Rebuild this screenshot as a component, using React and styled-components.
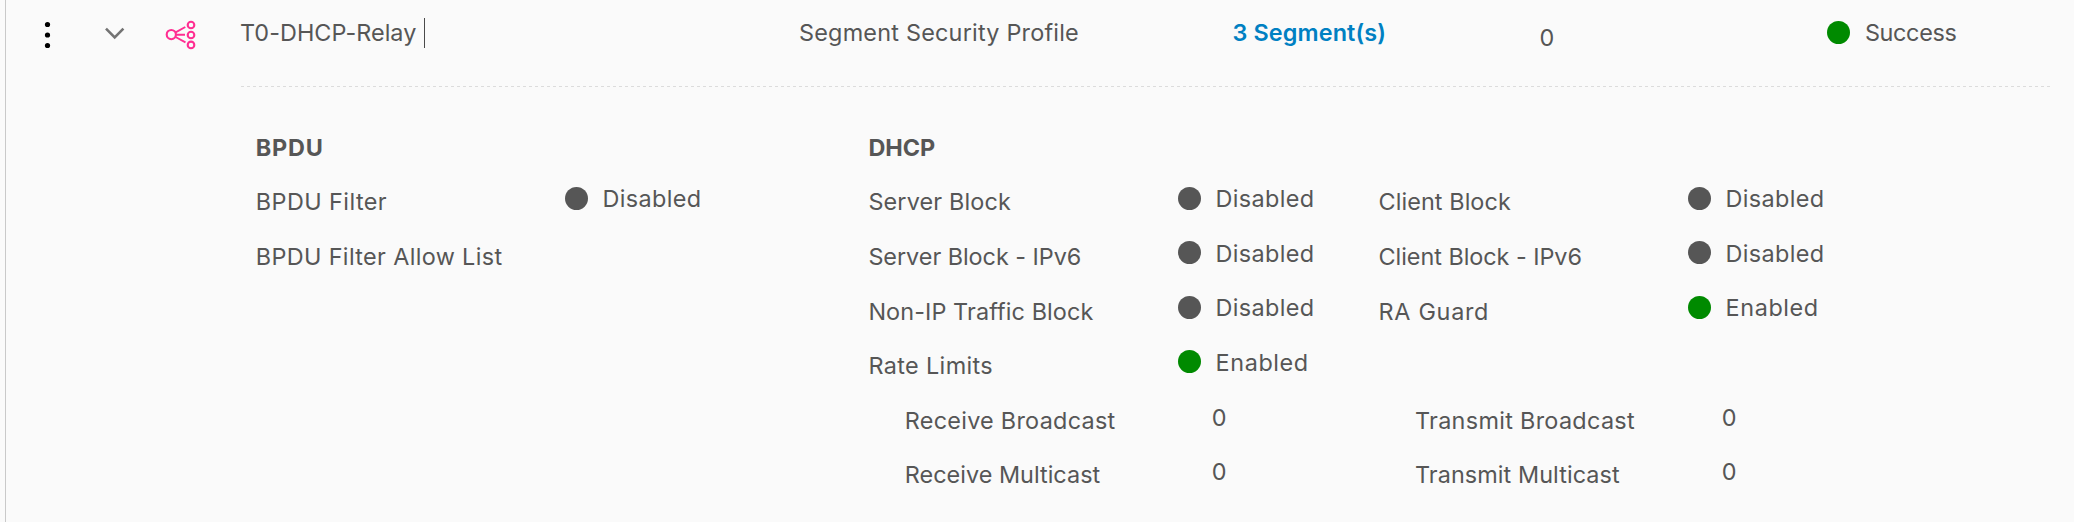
import React from 'react';
import styled, { createGlobalStyle } from 'styled-components';

const GlobalStyle = createGlobalStyle`
  * { box-sizing: border-box; }
  body {
    margin: 0;
    background: #fafafa;
    color: #565656;
    font: 400 23.4px 'Inter', 'Liberation Sans', sans-serif;
  }
`;

const Page = styled.div`
  height: 522px;
  padding-left: 5px;
  overflow: hidden;
`;

const Panel = styled.main`
  height: 100%;
  border-left: 1px solid #c9c9c9;
`;

const HeaderRow = styled.header`
  display: grid;
  grid-template-columns: 90px 67px 77px 559px 433.5px 307px 287px 1fr;
  align-items: center;
  height: 65px;
`;

const IconCell = styled.div`
  display: flex;
  padding-left: ${(p) => p.$inset}px;
  padding-top: ${(p) => p.$drop || 0}px;
`;

const Text = styled.span`
  line-height: 30px;
  white-space: nowrap;
  letter-spacing: ${(p) => p.$tracking || 0}px;
`;

const NameCell = styled.div`
  display: flex;
  align-items: center;
  gap: 8px;
`;

const Caret = styled.i`
  width: 1px;
  height: 30px;
  background: #4a4a4a;
`;

const SegmentLink = styled.a`
  color: #0080c2;
  font-weight: 600;
  line-height: 30px;
  letter-spacing: 0.12px;
`;

const CountCell = styled.div`
  padding-top: 10px;
  line-height: 30px;
`;

const StatusBox = styled.div`
  display: flex;
  align-items: ${(p) => (p.$low ? 'flex-end' : 'center')};
  height: ${(p) => (p.$low ? 31 : 30)}px;
  gap: ${(p) => p.$gap}px;
`;

const Dot = styled.span`
  flex: none;
  align-self: flex-start;
  margin-top: 3.5px;
  width: 23px;
  height: 23px;
  border-radius: 50%;
  background: ${(p) => (p.$on ? '#008a00' : '#565656')};
`;

const Divider = styled.div`
  height: 1px;
  margin: 21px 23px 0 235px;
  background: repeating-linear-gradient(90deg, #dcdcdc 0 3px, transparent 3px 6px);
`;

const Details = styled.div`
  display: grid;
  grid-template-columns: 612.6px 1fr;
  padding: 46px 0 0 249.8px;
`;

const SectionTitle = styled.h2`
  margin: 0;
  height: 41px;
  font-size: 23.4px;
  font-weight: 700;
  line-height: 30px;
  letter-spacing: ${(p) => p.$tracking}px;
`;

const Fields = styled.div`
  display: grid;
  grid-template-columns: ${(p) => p.$columns};
  grid-auto-rows: 54.6px;
`;

const Label = styled.div`
  padding: 13.4px 0 0 ${(p) => (p.$indent ? 36.4 : 0)}px;
  line-height: 30px;
  white-space: nowrap;
  letter-spacing: ${(p) => p.$tracking}px;
`;

const Value = styled.div`
  padding-top: 9px;
`;

const NumberValue = styled.div`
  padding: 10.2px 0 0 33.8px;
  line-height: 30px;
`;

function Status({ on, text, tracking, gap = 14.6, low }) {
  return (
    <StatusBox $gap={gap} $low={low}>
      <Dot $on={on} />
      <Text $tracking={tracking}>{text}</Text>
    </StatusBox>
  );
}

function Field({ label, tracking, indent, state, count }) {
  return (
    <>
      <Label $tracking={tracking} $indent={indent}>{label}</Label>
      {state ? (
        <Value>
          <Status low on={state === 'Enabled'} text={state} tracking={state === 'Enabled' ? 0.6 : 0.36} />
        </Value>
      ) : (
        <NumberValue>{count}</NumberValue>
      )}
    </>
  );
}

const bpduFields = [
  { label: 'BPDU Filter', tracking: 0.44, state: 'Disabled' },
  { label: 'BPDU Filter Allow List', tracking: 0.36 },
];

const dhcpFields = [
  { label: 'Server Block', tracking: 0.15, state: 'Disabled' },
  { label: 'Client Block', tracking: 0.08, state: 'Disabled' },
  { label: 'Server Block - IPv6', tracking: -0.03, state: 'Disabled' },
  { label: 'Client Block - IPv6', tracking: -0.04, state: 'Disabled' },
  { label: 'Non-IP Traffic Block', tracking: 0.1, state: 'Disabled' },
  { label: 'RA Guard', tracking: 0.7, state: 'Enabled' },
  { label: 'Rate Limits', tracking: 0.38, state: 'Enabled' },
  { label: '' },
  { label: 'Receive Broadcast', tracking: 0.27, indent: true, count: '0' },
  { label: 'Transmit Broadcast', tracking: 0.31, indent: true, count: '0' },
  { label: 'Receive Multicast', tracking: 0.03, indent: true, count: '0' },
  { label: 'Transmit Multicast', tracking: 0.08, indent: true, count: '0' },
];

const KebabIcon = () => (
  <svg width="8" height="30" viewBox="0 0 8 30" fill="#000">
    <circle cx="4.5" cy="4.5" r="2.6" />
    <circle cx="4.5" cy="15" r="2.6" />
    <circle cx="4.5" cy="25.5" r="2.6" />
  </svg>
);

const ChevronIcon = () => (
  <svg width="22" height="14" viewBox="0 0 22 14" fill="none" stroke="#737373" strokeWidth="2.6">
    <path d="M2 2.6 L10.7 11.3 L19.4 2.6" />
  </svg>
);

const SegmentIcon = () => (
  <svg width="32" height="30" viewBox="0 0 32 30" fill="none" stroke="#ff2e92" strokeWidth="2.1">
    <circle cx="6.3" cy="14.6" r="4.6" />
    <circle cx="26" cy="5" r="3.3" />
    <circle cx="26" cy="15" r="3.3" />
    <circle cx="26" cy="24.9" r="3.3" />
    <path d="M10.6 12.3 L20.3 7 M11 14.7 H20 M10.6 17 L20.5 22.3" strokeWidth="1.9" />
  </svg>
);

export default function App() {
  return (
    <Page>
      <GlobalStyle />
      <Panel>
        <HeaderRow>
          <IconCell $inset={37} $drop={4}><KebabIcon /></IconCell>
          <IconCell $inset={8}><ChevronIcon /></IconCell>
          <IconCell $inset={2} $drop={4}><SegmentIcon /></IconCell>
          <NameCell>
            <Text $tracking={0.05}>T0-DHCP-Relay</Text>
            <Caret />
          </NameCell>
          <Text $tracking={0.22}>Segment Security Profile</Text>
          <SegmentLink>3 Segment(s)</SegmentLink>
          <CountCell>0</CountCell>
          <Status on text="Success" tracking={-0.33} gap={15.4} />
        </HeaderRow>
        <Divider />
        <Details>
          <section>
            <SectionTitle $tracking={0.8}>BPDU</SectionTitle>
            <Fields $columns="309.2px 1fr">
              {bpduFields.map((f) => <Field key={f.label} {...f} />)}
            </Fields>
          </section>
          <section>
            <SectionTitle $tracking={0}>DHCP</SectionTitle>
            <Fields $columns="309.6px 200.6px 309.4px 1fr">
              {dhcpFields.map((f) => <Field key={f.label} {...f} />)}
            </Fields>
          </section>
        </Details>
      </Panel>
    </Page>
  );
}
